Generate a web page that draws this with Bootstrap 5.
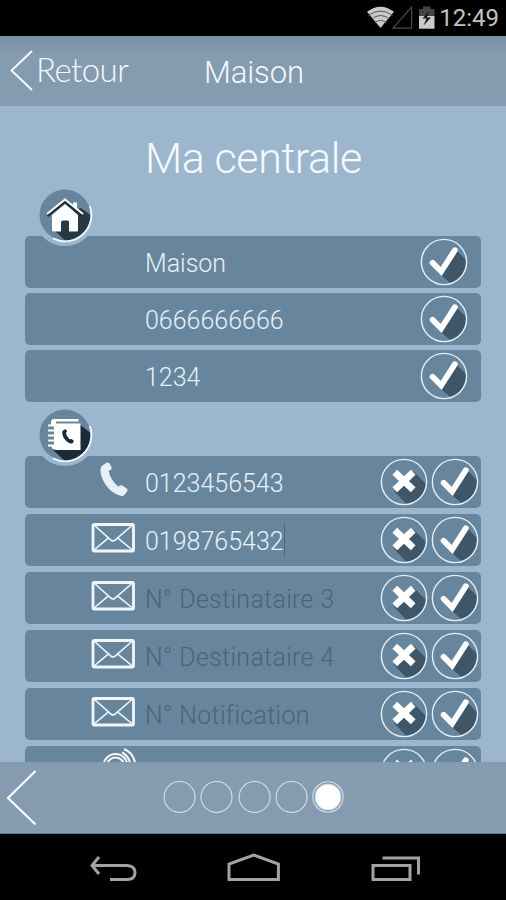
<!DOCTYPE html>
<html lang="fr">
<head>
<meta charset="utf-8">
<meta name="viewport" content="width=device-width, initial-scale=1">
<title>Ma centrale</title>
<link href="https://cdn.jsdelivr.net/npm/bootstrap@5.3.0/dist/css/bootstrap.min.css" rel="stylesheet">
<style>
body{width:506px;height:900px;background:#9bb6cd;font-family:Roboto,"Liberation Sans",sans-serif;font-weight:300;color:#f4f9fd}
svg{display:block;flex:none}
.statusbar{height:36px;background:#000;color:#c2c2c2;font-size:24px;font-weight:400;line-height:38px}
.clock{margin:0 7px 0 1px}
.topbar{height:70px;background:linear-gradient(#7890a3,#849bb0 18px);display:grid;grid-template-columns:204px 1fr}
.back-link{font-family:Lato,sans-serif;font-size:33px;line-height:66px;letter-spacing:-.55px}
.screen-title{font-size:31px;line-height:73px;letter-spacing:-.1px}
.content-pane{height:656px;padding:0 25px}
.page-title{font-size:43px;line-height:52px;margin:26px 0 0;padding-left:120px;font-weight:300;letter-spacing:-.4px;white-space:nowrap}
.badge-row{height:52px;padding-left:9px}
.badge-row svg{position:relative;z-index:2}
.field{height:52px;width:456px;background:#67869e;border-radius:5px;font-size:25px;line-height:52px;padding-right:2px;white-space:nowrap;color:#e6f0f8}
.field>span{padding-top:4px}
.group-a{padding-top:.4px}
.group-a .field{margin-bottom:4.8px}
.group-a + .badge-row{height:51.2px}
.group-a + .badge-row>svg{margin-top:-2px;transform:translateY(-1px)}
.group-b .field{margin-bottom:6px}
.field-icon{width:120px;padding-left:66px}
.mail-icon{margin-bottom:4px}
.handset-icon{margin:0 0 4px 9px}
.hint{color:#52626f;letter-spacing:.3px}
.actions{margin-left:auto;gap:3px}
.caret{width:1px;height:34px;background:#4b6779}
.bottombar{height:72px;background:#849bb0;border-bottom:1px solid #63798b;padding-left:6px}
.pager{margin-left:125px}
.navkeys{height:66px;background:#000;padding-left:88px}
</style>
<script src="https://cdn.jsdelivr.net/npm/bootstrap@5.3.0/dist/js/bootstrap.bundle.min.js"></script>
</head>
<body class="overflow-hidden m-0">
<svg width="0" height="0" class="position-absolute" aria-hidden="true">
<defs>
<clipPath id="disc"><circle cx="24" cy="24" r="22"/></clipPath>
<clipPath id="bigdisc"><circle cx="31" cy="31" r="25.5"/></clipPath>
</defs>
<symbol id="ok" viewBox="0 0 48 48">
<path d="M36 12L60 36L48 60L22 38L20 35z" fill="#3f5668" clip-path="url(#disc)"/>
<circle cx="24" cy="24" r="22.6" fill="none" stroke="#e3eef7" stroke-width="1.4"/>
<path d="M12.6 24.8L21.2 33.5L34.8 12.3" fill="none" stroke="#fff" stroke-width="5.8" stroke-linecap="round" stroke-linejoin="miter"/>
</symbol>
<symbol id="del" viewBox="0 0 48 48">
<path d="M34 14L62 42L42 62L14 33L24 22z" fill="#3f5668" clip-path="url(#disc)"/>
<circle cx="24" cy="24" r="22.6" fill="none" stroke="#e3eef7" stroke-width="1.4"/>
<path d="M14.8 14.2L33.2 31.8M33.2 14.2L14.8 31.8" stroke="#fff" stroke-width="6.8"/>
</symbol>
<symbol id="mail" viewBox="0 0 44 32">
<rect x="2" y="2.5" width="40.5" height="26.5" rx="1.2" fill="none" stroke="#f1f6fa" stroke-width="2.8"/>
<path d="M3 3L20.5 18.5Q22 19.5 23.5 18.5L41.5 3M3 28L17.5 15.8M41.5 28L26.5 15.8" fill="none" stroke="#f1f6fa" stroke-width="1.6"/>
</symbol>
<symbol id="handset" viewBox="0 0 28 35">
<path d="M2.6 3.3L7 .6Q8.5 0 9.4 1.3L11.6 5.2Q12.2 6.8 10.8 7.7L8.8 9Q10.2 17.8 18.2 24.6L20.2 23.6Q21.8 22.8 23 24L27 26.8Q28 27.8 27.2 29.2L24.4 33Q23.2 34.5 20.7 33.7C9.5 31 .8 18.5 .4 8Q.4 4.5 2.6 3.3z" fill="currentColor"/>
</symbol>
</svg>

<header class="statusbar d-flex align-items-center">
<svg width="78" height="36" viewBox="0 0 78 36" class="ms-auto">
<path d="M7 11.8Q20.5 1.5 34 11.8L20.5 28z" fill="#c9c9c9"/>
<path d="M8.5 15.5Q20.5 6.5 32.5 15.5M11.5 19Q20.5 12 29.5 19M14.5 22.8Q20.5 18 26.5 22.8" fill="none" stroke="#555" stroke-width="1"/>
<path d="M33 28.2L51.6 7.2V28.2z" fill="none" stroke="#4a4a4a" stroke-width="1.2"/>
<path d="M59 9H63V6.5H70.5V9H74.5V16H59z" fill="#444"/>
<path d="M59 16H74.5V28.7H59z" fill="#ccc"/>
<path d="M69 11L62.5 18.5H66.5L63.5 25.5L71 17.5H67z" fill="#151515"/>
</svg>
<span class="clock">12:49</span>
</header>

<nav class="topbar">
<div class="back-link d-flex align-items-start">
<svg width="36" height="69" viewBox="0 0 36 69"><path d="M32 15L11.5 34.5L32 54" fill="none" stroke="#f6fbff" stroke-width="2"/></svg><span>Retour</span>
</div>
<div class="screen-title">Maison</div>
</nav>

<main class="content-pane overflow-hidden">
<h1 class="page-title">Ma centrale</h1>
<div class="badge-row">
<svg width="62" height="62" viewBox="0 0 62 62">
<circle cx="31" cy="31" r="31" fill="#9bb6cd"/>
<circle cx="31" cy="31" r="25.5" fill="#67869e"/>
<path d="M47 24L75 45L45 70L20 46L28 30z" fill="#273945" clip-path="url(#bigdisc)"/>
<path d="M55.8 22A26.3 26.3 0 0 1 19 54.4" fill="none" stroke="#eff7fc" stroke-width="1.8"/>
<path d="M18 31L31 20L44 31V46.5Q44 47.5 43 47.5H35V38Q35 36.5 33.5 36.5H29Q27 36.5 27 38.5V47.5H19.5Q18 47.5 18 46z" fill="#fff"/>
<path d="M13.5 32L31 18L48.5 32" fill="none" stroke="#1e2e3a" stroke-width="2.4"/>
<path d="M13 30L31 15.5L49 30" fill="none" stroke="#fff" stroke-width="2"/>
<path d="M39 18.5H43V25L39 21.5z" fill="#fff"/>
</svg>
</div>
<section class="group-a">
<div class="field d-flex align-items-center"><div class="field-icon"></div><span>Maison</span><svg class="ms-auto me-2" width="52" height="48"><use href="#ok" width="50" height="48"/></svg></div>
<div class="field d-flex align-items-center"><div class="field-icon"></div><span>0666666666</span><svg class="ms-auto me-2" width="52" height="48"><use href="#ok" width="50" height="48"/></svg></div>
<div class="field d-flex align-items-center"><div class="field-icon"></div><span>1234</span><svg class="ms-auto me-2" width="52" height="48"><use href="#ok" width="50" height="48"/></svg></div>
</section>
<div class="badge-row">
<svg width="62" height="62" viewBox="0 0 62 62">
<circle cx="31" cy="31" r="31" fill="#9bb6cd"/>
<circle cx="31" cy="31" r="25.5" fill="#67869e"/>
<path d="M45 20L75 43L45 70L19 46z" fill="#1b2b38" clip-path="url(#bigdisc)"/>
<path d="M55.8 22A26.3 26.3 0 0 1 19 54.4" fill="none" stroke="#eff7fc" stroke-width="1.8"/>
<path d="M20.5 15H44.5V17.5H22V19.5H46.5V46H23Q18 46 17.5 42.5H14V40.5H20V37.5H14V35.5H20V32.5H14V30.5H20V27.5H14V25.5H20V22.5H14V20.5H17V18Q17 15 20.5 15z" fill="#fff"/>
<svg x="28" y="23" width="12" height="19" color="#1b2b38"><use href="#handset"/></svg>
</svg>
</div>
<section class="group-b">
<div class="field d-flex align-items-center"><div class="field-icon"><svg width="28" height="35" class="handset-icon"><use href="#handset"/></svg></div><span>0123456543</span><div class="actions d-flex"><svg width="48" height="48"><use href="#del"/></svg><svg width="48" height="48"><use href="#ok"/></svg></div></div>
<div class="field d-flex align-items-center"><div class="field-icon"><svg class="mail-icon" width="44" height="32"><use href="#mail"/></svg></div><span>0198765432</span><i class="caret"></i><div class="actions d-flex"><svg width="48" height="48"><use href="#del"/></svg><svg width="48" height="48"><use href="#ok"/></svg></div></div>
<div class="field d-flex align-items-center"><div class="field-icon"><svg class="mail-icon" width="44" height="32"><use href="#mail"/></svg></div><span class="hint">N° Destinataire 3</span><div class="actions d-flex"><svg width="48" height="48"><use href="#del"/></svg><svg width="48" height="48"><use href="#ok"/></svg></div></div>
<div class="field d-flex align-items-center"><div class="field-icon"><svg class="mail-icon" width="44" height="32"><use href="#mail"/></svg></div><span class="hint">N° Destinataire 4</span><div class="actions d-flex"><svg width="48" height="48"><use href="#del"/></svg><svg width="48" height="48"><use href="#ok"/></svg></div></div>
<div class="field d-flex align-items-center"><div class="field-icon"><svg class="mail-icon" width="44" height="32"><use href="#mail"/></svg></div><span class="hint">N° Notification</span><div class="actions d-flex"><svg width="48" height="48"><use href="#del"/></svg><svg width="48" height="48"><use href="#ok"/></svg></div></div>
<div class="field d-flex align-items-center"><div class="field-icon"><svg width="50" height="48" viewBox="0 0 50 48" fill="none" stroke="#f4f9fc" stroke-width="2"><circle cx="24.5" cy="18" r="12"/><circle cx="24.5" cy="18" r="8.6"/><path d="M31 4.5Q38 8 39.5 17M33 1Q43 5 44.5 17"/></svg></div><div class="actions d-flex"><svg width="48" height="48"><use href="#del"/></svg><svg width="48" height="48"><use href="#ok"/></svg></div></div>
</section>
</main>

<footer class="bottombar d-flex align-items-center">
<svg width="32" height="60" viewBox="0 0 32 60"><path d="M29.5 3L2 30L29.5 56.5" fill="none" stroke="#fff" stroke-width="2.2"/></svg>
<svg class="pager" width="182" height="34" viewBox="0 0 182 34" fill="none" stroke="#d3e0ea" stroke-width="1.1">
<circle cx="16.6" cy="16" r="15.5"/><circle cx="53.5" cy="16" r="15.5"/><circle cx="91.6" cy="16" r="15.5"/><circle cx="128.6" cy="16" r="15.5"/><circle cx="165" cy="16" r="15.2"/><circle cx="165" cy="16" r="12.8" fill="#fff"/>
</svg>
</footer>
<div class="navkeys">
<svg width="336" height="66" viewBox="0 0 336 66" fill="none" stroke="#a3a3a3" stroke-width="3">
<path d="M11 23L4 31.5L11 40M4 31.5H39Q47 32 47 38.5Q47 45.5 39 45.5H22"/>
<path d="M141 45.5V30L165.7 21L190.4 30V45.5z"/>
<path d="M285 31.5H322V45.5H285zM294.5 24H330.5V40.5"/>
</svg>
</div>
</body>
</html>
